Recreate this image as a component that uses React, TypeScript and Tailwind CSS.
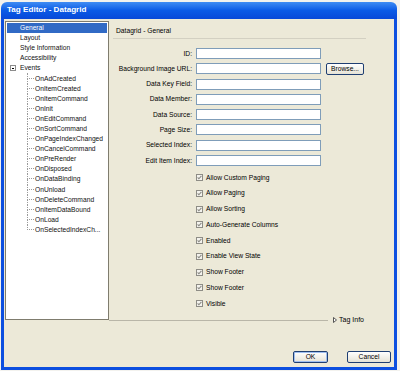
const topItems = ["General", "Layout", "Style Information", "Accessibility"];

const events = [
  "OnAdCreated",
  "OnItemCreated",
  "OnItemCommand",
  "OnInit",
  "OnEditCommand",
  "OnSortCommand",
  "OnPageIndexChanged",
  "OnCancelCommand",
  "OnPreRender",
  "OnDisposed",
  "OnDataBinding",
  "OnUnload",
  "OnDeleteCommand",
  "OnItemDataBound",
  "OnLoad",
  "OnSelectedIndexCh...",
];

const fields = [
  "ID:",
  "Background Image URL:",
  "Data Key Field:",
  "Data Member:",
  "Data Source:",
  "Page Size:",
  "Selected Index:",
  "Edit Item Index:",
];

const options = [
  "Allow Custom Paging",
  "Allow Paging",
  "Allow Sorting",
  "Auto-Generate Columns",
  "Enabled",
  "Enable View State",
  "Show Footer",
  "Show Footer",
  "Visible",
];

const CheckBox = () => (
  <svg width="7" height="7" viewBox="0 0 7 7" className="shrink-0">
    <rect x="0.5" y="0.5" width="6" height="6" fill="#f4f3ee" stroke="#8e8d86" />
    <polyline points="1.6,3.4 2.9,4.8 5.4,1.9" fill="none" stroke="#8a8a84" strokeWidth="1.1" />
  </svg>
);

const XpButton = ({ label, def }: { label: string; def?: boolean }) => (
  <div
    className={
      "h-[12px] flex items-center justify-center rounded-[2px] border border-[#1f3f72] bg-gradient-to-b from-white to-[#e6e3d6] text-[6.7px] leading-none text-black " +
      (def ? "shadow-[inset_0_0_0_1px_#9fbff0]" : "")
    }
  >
    {label}
  </div>
);

const Tree = () => (
  <div className="w-[104px] h-[299px] bg-white border border-[#7f7c6e] p-[1px]">
    {topItems.map((t, i) => (
      <div
        key={t}
        className={
          "h-[10.1px] flex items-center pl-[13px] " +
          (i === 0 ? "bg-[#316ac5] text-white" : "text-[#111]")
        }
      >
        {t}
      </div>
    ))}
    <div className="h-[10.1px] flex items-center text-[#111]">
      <div className="ml-[3px] w-[6px] h-[6px] border border-[#8c8c8c] flex items-center justify-center bg-white">
        <div className="w-[2px] h-px bg-black" />
      </div>
      <span className="ml-[4px]">Events</span>
    </div>
    {events.map((e, i) => (
      <div key={e} className="h-[10.1px] flex items-center text-[#111]">
        <div className="ml-[20px] w-[7px] h-full flex flex-col">
          <div className="h-1/2 border-l border-b border-dotted border-[#9a9a9a]" />
          <div
            className={
              i === events.length - 1
                ? "flex-1"
                : "flex-1 border-l border-dotted border-[#9a9a9a]"
            }
          />
        </div>
        <span className="ml-[1px] whitespace-nowrap">{e}</span>
      </div>
    ))}
  </div>
);

export default function App() {
  return (
    <div
      className="w-[400px] h-[371px] bg-[#f3f2ee] pt-[2px] pl-[1px] overflow-hidden text-[6.7px] leading-[8px] text-black"
      style={{ fontFamily: '"Liberation Sans", Arial, sans-serif' }}
    >
      <div className="w-[396px] h-[368px] flex flex-col">
        <div className="h-[17px] rounded-t-[6px] bg-gradient-to-b from-[#3f8cf3] via-[#0a5ae6] to-[#0848d8] flex items-center pl-[6px]">
          <span className="text-white font-bold text-[8.1px] leading-none">Tag Editor - Datagrid</span>
        </div>
        <div className="flex-1 bg-[#ece9d8] border-x-[3px] border-b-[3px] border-[#0c4fe0] flex flex-col">
          <div className="flex items-start pt-[2px] pl-[1px]">
            <Tree />
            <div className="flex-1 h-[303px] flex flex-col">
              <div className="pl-[7px] pt-[6px] h-[14px]">Datagrid - General</div>
              <div className="ml-[4px] mt-[3px] w-[253px] h-px bg-[#d3d0c2]" />
              <div className="mt-[9px] flex flex-col gap-[4.3px]">
                {fields.map((f, i) => (
                  <div key={f} className="h-[11px] flex items-start">
                    <div className="w-[83px] h-[11px] flex items-center justify-end whitespace-nowrap">
                      {f}
                    </div>
                    <div className="ml-[4px] w-[125px] h-[11px] bg-white border border-[#7f9db9]" />
                    {i === 1 && (
                      <div className="ml-[5px] w-[38px]">
                        <XpButton label="Browse..." />
                      </div>
                    )}
                  </div>
                ))}
              </div>
              <div className="mt-[8px] flex flex-col gap-[8.75px] pl-[87px]">
                {options.map((o, i) => (
                  <div key={i} className="h-[7px] flex items-center">
                    <CheckBox />
                    <span className="ml-[3px] whitespace-nowrap">{o}</span>
                  </div>
                ))}
              </div>
              <div className="mt-auto h-[8px] flex items-center pr-[30px]">
                <div className="flex-1 h-px bg-[#b9b6a8]" />
                <svg width="4" height="6" viewBox="0 0 4 6" className="ml-[5px] shrink-0">
                  <polygon points="0.5,0.5 3.5,3 0.5,5.5" fill="white" stroke="#444" strokeWidth="0.9" />
                </svg>
                <span className="ml-[2px] text-[7px]">Tag Info</span>
              </div>
            </div>
          </div>
          <div className="flex-1 flex items-end justify-end pb-[4px] pr-[3px]">
            <div className="w-[35px]">
              <XpButton label="OK" def />
            </div>
            <div className="ml-[19px] w-[44px]">
              <XpButton label="Cancel" />
            </div>
          </div>
        </div>
      </div>
    </div>
  );
}
